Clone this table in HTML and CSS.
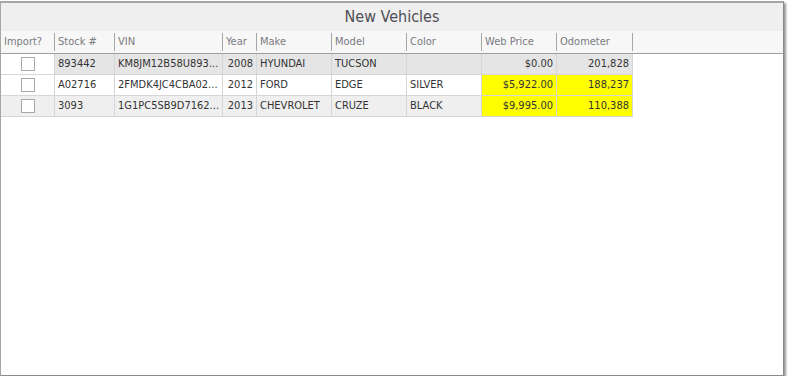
FILE: index.html
```html
<!DOCTYPE html>
<html>
<head>
<meta charset="utf-8">
<title>New Vehicles</title>
<link rel="stylesheet" href="styles.css">
</head>
<body>
<div class="panel">
  <div class="caption">New Vehicles</div>
  <div class="head">
    <div class="hc">Import?</div>
    <div class="hc">Stock #</div>
    <div class="hc">VIN</div>
    <div class="hc">Year</div>
    <div class="hc">Make</div>
    <div class="hc">Model</div>
    <div class="hc">Color</div>
    <div class="hc">Web Price</div>
    <div class="hc">Odometer</div>
  </div>
  <div class="rows">
    <div class="row focused">
      <div class="c check"><span class="box"></span></div>
      <div class="c">893442</div>
      <div class="c">KM8JM12B58U893...</div>
      <div class="c num">2008</div>
      <div class="c">HYUNDAI</div>
      <div class="c">TUCSON</div>
      <div class="c"></div>
      <div class="c num">$0.00</div>
      <div class="c num">201,828</div>
    </div>
    <div class="row">
      <div class="c check"><span class="box"></span></div>
      <div class="c">A02716</div>
      <div class="c">2FMDK4JC4CBA02...</div>
      <div class="c num">2012</div>
      <div class="c">FORD</div>
      <div class="c">EDGE</div>
      <div class="c">SILVER</div>
      <div class="c num flag">$5,922.00</div>
      <div class="c num flag">188,237</div>
    </div>
    <div class="row alt">
      <div class="c check"><span class="box"></span></div>
      <div class="c">3093</div>
      <div class="c">1G1PC5SB9D7162...</div>
      <div class="c num">2013</div>
      <div class="c">CHEVROLET</div>
      <div class="c">CRUZE</div>
      <div class="c">BLACK</div>
      <div class="c num flag">$9,995.00</div>
      <div class="c num flag">110,388</div>
    </div>
  </div>
</div>
</body>
</html>
```
FILE: styles.css
```css
html, body {
  margin: 0;
  padding: 0;
  background: #ffffff;
}

body {
  font-family: "DejaVu Sans Condensed", "DejaVu Sans", sans-serif;
  font-size: 11px;
  color: #333333;
}

.panel {
  box-sizing: border-box;
  margin-top: 1px;
  width: 784px;
  height: 375px;
  border-top: 2px solid #a6a6a6;
  border-left: 1px solid #a6a6a6;
  border-right: 1px solid #8a8a8a;
  border-bottom: 1px solid #8a8a8a;
  box-shadow: 2px 2px 2px rgba(0, 0, 0, 0.4);
  background: #ffffff;
}

.caption {
  height: 28px;
  line-height: 28px;
  background: #efefef;
  text-align: center;
  font-size: 16px;
  color: #4f4d55;
}

.head {
  display: grid;
  grid-template-columns: 54px 60px 108px 34px 75px 75px 75px 75px 76px;
  height: 22px;
  background: #f7f7f7;
  border-bottom: 1px solid #a0a0a0;
}

.hc {
  box-sizing: border-box;
  margin: 2px 0;
  height: 18px;
  line-height: 18px;
  padding-left: 3px;
  border-right: 1px solid #a6a6a6;
  color: #7a7a82;
  white-space: nowrap;
  overflow: hidden;
}

.row {
  display: grid;
  grid-template-columns: 54px 60px 108px 34px 75px 75px 75px 75px 76px;
  width: 632px;
  height: 21px;
  box-sizing: border-box;
  border-bottom: 1px solid #d6d6d6;
}

.c {
  box-sizing: border-box;
  border-right: 1px solid #d6d6d6;
  line-height: 20px;
  padding: 0 3px;
  white-space: nowrap;
  overflow: hidden;
}

.num {
  text-align: right;
}

.focused .c {
  background: #e5e5e5;
}

.focused .check {
  background: #ffffff;
}

.alt .c {
  background: #efefef;
}

.c.flag {
  background: #ffff00;
}

.check {
  display: flex;
  align-items: center;
  justify-content: center;
}

.box {
  box-sizing: border-box;
  width: 14px;
  height: 14px;
  border: 1px solid #a8a8a8;
  background: #ffffff;
}
```
